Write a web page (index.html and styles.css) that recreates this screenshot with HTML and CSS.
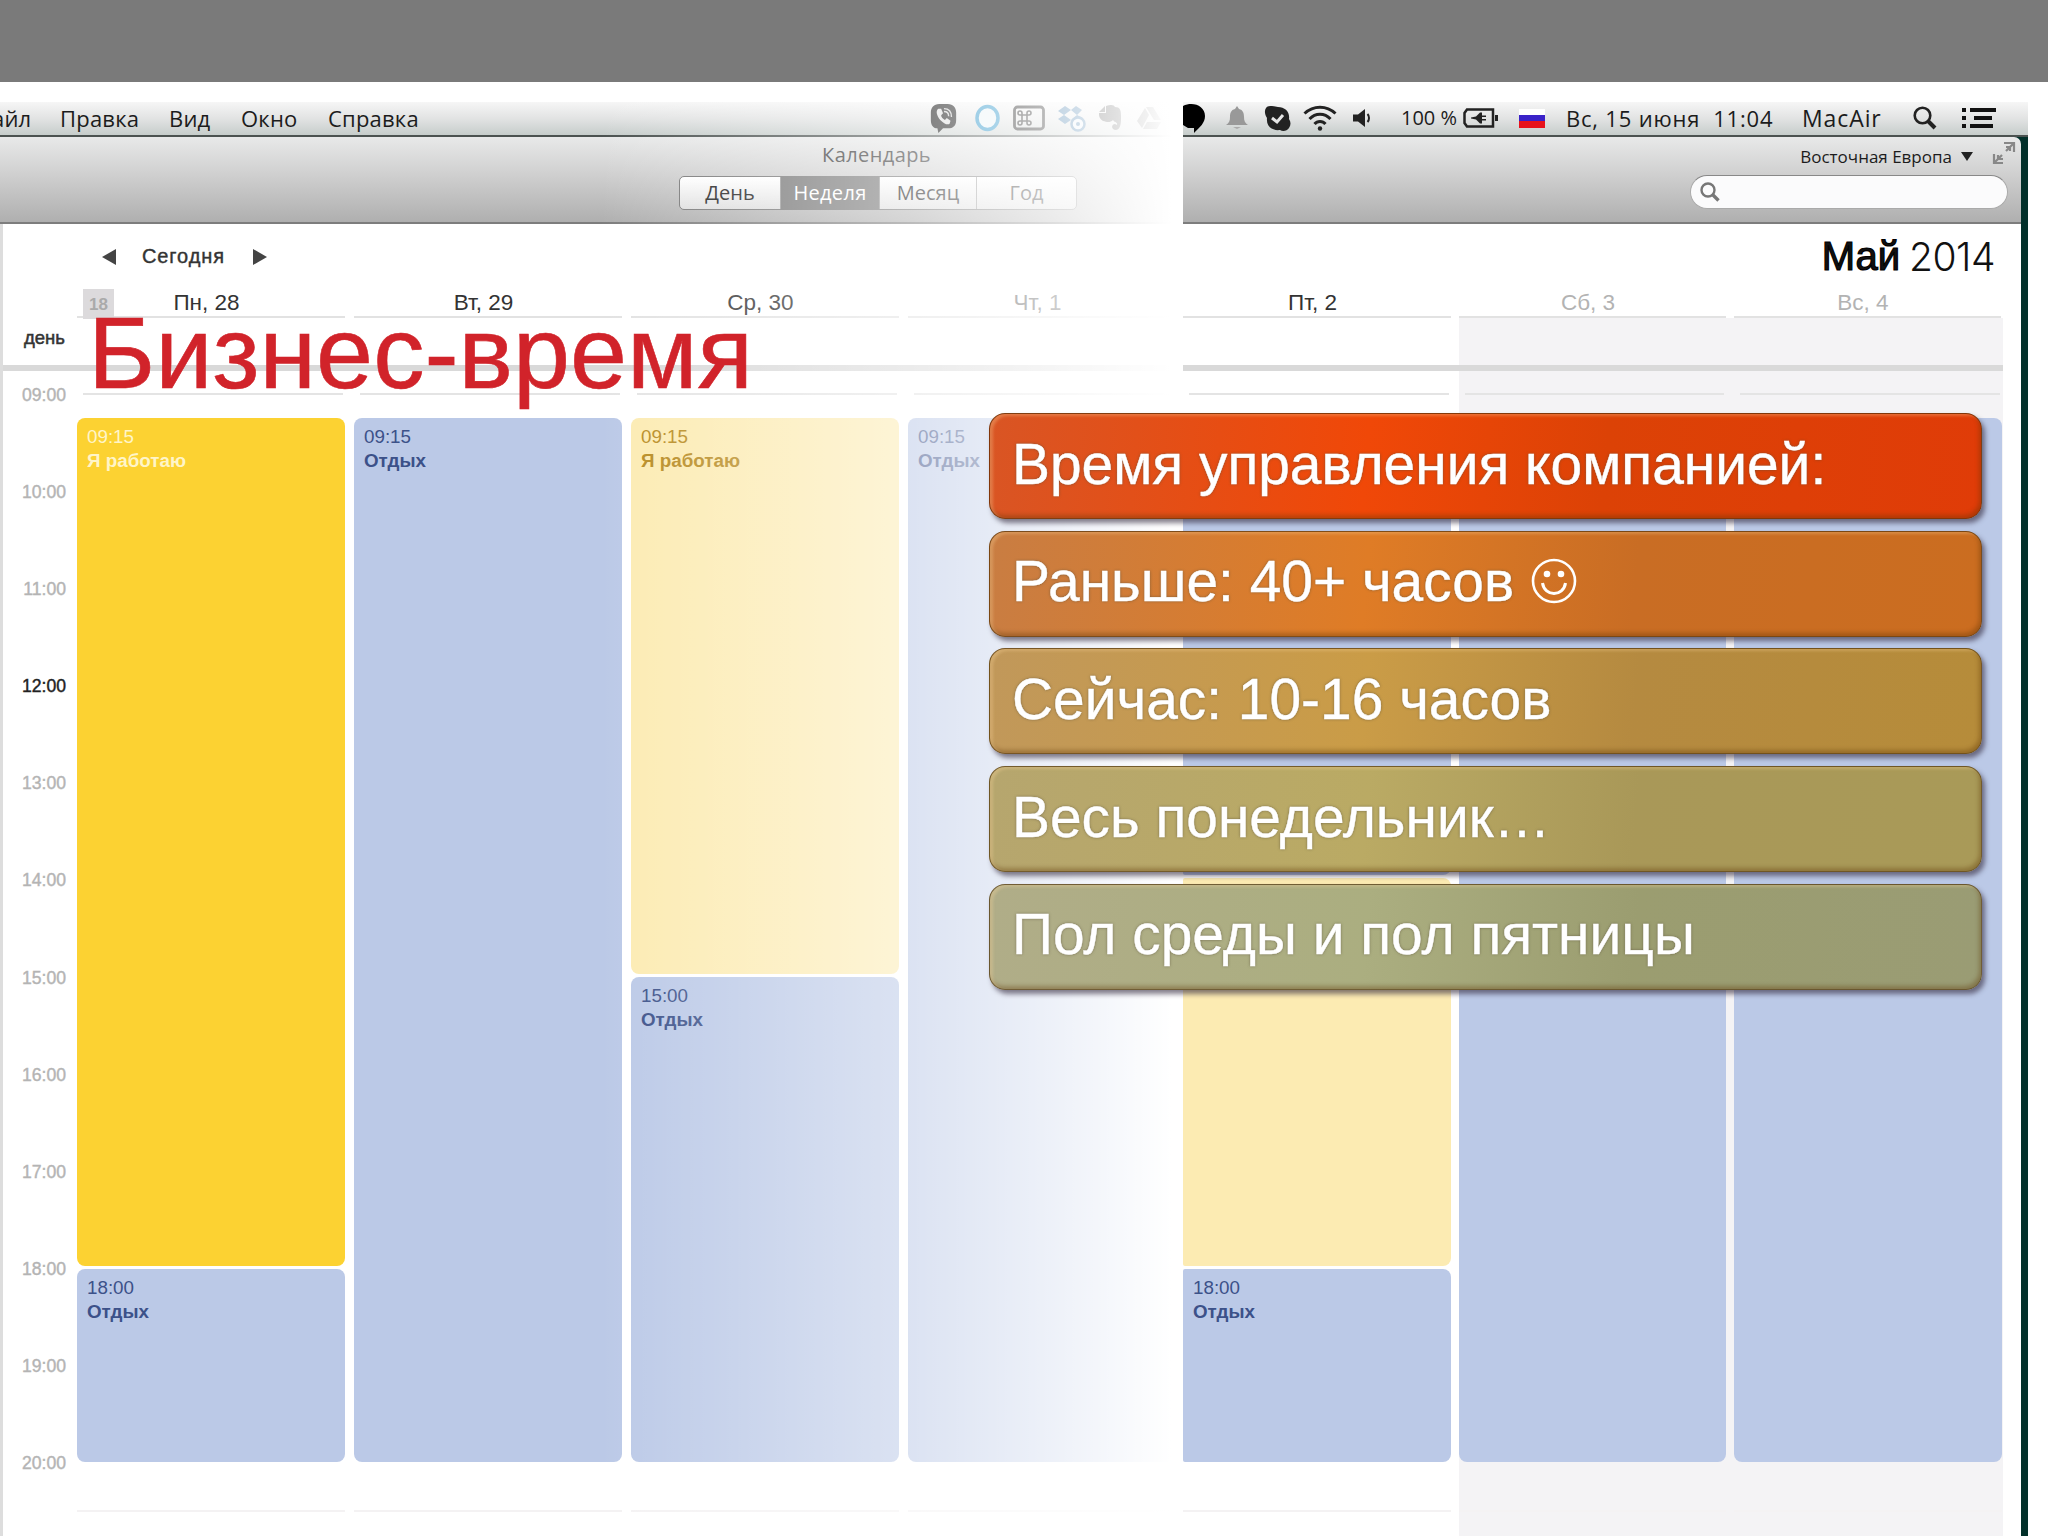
FILE: index.html
```html
<!DOCTYPE html>
<html lang="ru">
<head>
    <meta charset="UTF-8">
    <title>Бизнес-время</title>
    <link rel="stylesheet" href="styles.css">
</head>
<body>
    <div class="slide">
        <div class="top-strip"></div>

        <div class="screens">
            <!-- left part of the calendar, fades out to the right -->
            <section class="screen screen-left">
                <div class="menubar">
                    <nav class="menu">
                        <span>айл</span>
                        <span>Правка</span>
                        <span>Вид</span>
                        <span>Окно</span>
                        <span>Справка</span>
                    </nav>
                    <div class="tray">
                        <svg width="29" height="30" viewBox="0 0 29 32">
                            <path d="M10 1h9c6 0 9 4 9 9v8c0 6-3 9-9 9h-5l-5 5-1-5C4 27 1 24 1 18v-8c0-5 3-9 9-9z" fill="#000"/>
                            <path d="M9 6c-3 2-2 7 2 12 4 4 8 6 10 4l1-3-4-3-2 2c-2-1-4-3-4-5l2-2-2-5z" fill="#ddd"/>
                            <path d="M15 6c5 0 8 3 8 9M15 9c3 0 5 2 5 5" fill="none" stroke="#ccc" stroke-width="1.5"/>
                        </svg>
                        <svg width="27" height="30" viewBox="0 0 27 30">
                            <ellipse cx="13.500" cy="15" rx="10.500" ry="11.500" fill="#e9f2f5" stroke="#1389c4" stroke-width="3.500"/>
                        </svg>
                        <svg width="32" height="26" viewBox="0 0 32 26">
                            <rect x="1.500" y="2" width="29" height="22" rx="3" fill="none" stroke="#000" stroke-width="2.800"/>
                            <path d="M9 10h5v6H9zM9 10H7a2 2 0 1 1 2-2zM14 10V8a2 2 0 1 1 2 2zM14 16h2a2 2 0 1 1-2 2zM9 16v2a2 2 0 1 1-2-2z" fill="none" stroke="#000" stroke-width="1.600"/>
                        </svg>
                        <svg width="30" height="28" viewBox="0 0 30 28">
                            <path d="M8 2l6 4-7 5-6-4zM19 2l6 4-5 5-6-5zM7 11l7 5-6 4-7-5zM20 11l-6 5 4 3 8-5z" fill="#1a5f98"/>
                            <circle cx="21" cy="20" r="6.500" fill="#e8f1f8" stroke="#1a5f98" stroke-width="2.500"/>
                            <circle cx="21" cy="20" r="2" fill="#1a5f98"/>
                        </svg>
                        <svg width="24" height="28" viewBox="0 0 24 28">
                            <path d="M1 8l6-6v6zM8 2c6-2 8-1 9 1 5 0 6 3 6 9 0 7 0 13-5 14-5 0-5-6-1-6l2 1c1-3-2-2-4-5-3 3-6 2-10 1C1 14 1 12 1 9h7z" fill="#000"/>
                        </svg>
                        <svg width="26" height="24" viewBox="0 0 26 24">
                            <path d="M10 1h7l8 13h-7zM9 2l4 7-7 13-5-7zM11 16h14l-4 7H7z" fill="#000"/>
                        </svg>
                    </div>
                </div>

                <div class="toolbar">
                    <div class="window-title">Календарь</div>
                    <div class="segments">
                        <span>День</span>
                        <span class="active">Неделя</span>
                        <span>Месяц</span>
                        <span>Год</span>
                    </div>
                </div>

                <div class="calendar">
                    <div class="nav-row">
                        <svg width="14" height="16" viewBox="0 0 14 16"><path d="M14 0v16L0 8z" fill="#444"/></svg>
                        <span>Сегодня</span>
                        <svg width="14" height="16" viewBox="0 0 14 16"><path d="M0 0v16l14-8z" fill="#444"/></svg>
                    </div>
                    <div class="days">
                        <div class="day"><span class="week-badge">18</span>Пн, 28</div>
                        <div class="day">Вт, 29</div>
                        <div class="day">Ср, 30</div>
                        <div class="day">Чт, 1</div>
                    </div>
                    <div class="all-day">день</div>
                    <div class="grid">
                        <div class="hours">
                            <span>09:00</span>
                            <span>10:00</span>
                            <span>11:00</span>
                            <span class="noon">12:00</span>
                            <span>13:00</span>
                            <span>14:00</span>
                            <span>15:00</span>
                            <span>16:00</span>
                            <span>17:00</span>
                            <span>18:00</span>
                            <span>19:00</span>
                            <span>20:00</span>
                        </div>
                        <div class="column">
                            <div class="event work-solid to-18">09:15<b>Я работаю</b></div>
                            <div class="event rest">18:00<b>Отдых</b></div>
                        </div>
                        <div class="column">
                            <div class="event rest">09:15<b>Отдых</b></div>
                        </div>
                        <div class="column">
                            <div class="event work to-15">09:15<b>Я работаю</b></div>
                            <div class="event rest">15:00<b>Отдых</b></div>
                        </div>
                        <div class="column">
                            <div class="event rest">09:15<b>Отдых</b></div>
                        </div>
                    </div>
                </div>
                <div class="fade"></div>
            </section>

            <!-- right part -->
            <section class="screen screen-right">
                <div class="menubar status">
                    <svg width="23" height="30" viewBox="0 0 23 30">
                        <path d="M0 3C10-2 22 3 22 13c0 7-5 11-11 17v-5H5l-5-3z" fill="#000"/>
                    </svg>
                    <svg width="22" height="24" viewBox="0 0 22 24">
                        <path d="M11 0l2 3c4 1 5 4 5 8 0 4 1 6 4 8H0c3-2 4-4 4-8 0-4 1-7 5-8z" fill="#999"/>
                        <path d="M7 21h8l-4 2z" fill="#aaa"/>
                    </svg>
                    <svg width="27" height="27" viewBox="0 0 27 27">
                        <path d="M8 1c3 0 4 1 6 1 7 0 12 5 11 12 2 3 2 6 0 9-2 3-6 4-9 2C8 26 2 21 3 13 1 10 0 6 2 3c1-2 4-2 6-2z" fill="#222"/>
                        <path d="M8 13l5 4 6-7" fill="none" stroke="#e5e5e5" stroke-width="3"/>
                    </svg>
                    <svg width="34" height="26" viewBox="0 0 34 26" fill="none" stroke="#222" stroke-width="3">
                        <path d="M1.500 8.500c9-8.500 22-8.500 31 0M6.500 14c6-6.500 15-6.500 21 0M11.500 19c3-3.500 8-3.500 11 0"/>
                        <circle cx="17" cy="23.500" r="2.200" fill="#222" stroke="none"/>
                    </svg>
                    <svg width="18" height="18" viewBox="0 0 18 18">
                        <path d="M0 5.500h5L12 0v18l-7-5.500H0z" fill="#222"/>
                        <path d="M14.500 5c2 2 2 6 0 8" fill="none" stroke="#222" stroke-width="2"/>
                    </svg>
                    <span class="percent">100 %</span>
                    <svg width="35" height="20" viewBox="0 0 35 20">
                        <path d="M4 1.500L1.500 5v10L4 18.500h26v-17z" fill="none" stroke="#222" stroke-width="2.500"/>
                        <path d="M32 7h3v6h-3z" fill="#222"/>
                        <path d="M8 9.500l5-1 4-4h2v3h4v1.500h-4v2h4v1.500h-4v3h-2l-4-4-5-1z" fill="#222"/>
                    </svg>
                    <span class="flag"></span>
                    <span class="date">Вс, 15 июня&nbsp; 11:04</span>
                    <span class="user">MacAir</span>
                    <svg width="24" height="24" viewBox="0 0 24 24" fill="none" stroke="#222">
                        <circle cx="9.500" cy="9.500" r="7.800" stroke-width="2.600"/>
                        <path d="M15 15l7 7" stroke-width="4"/>
                    </svg>
                    <svg width="34" height="22" viewBox="0 0 34 22" fill="#111">
                        <path d="M0 1h4v4H0zM8 1h26v4H8zM0 9h4v4H0zM12 9h18v4H12zM0 17h4v4H0zM8 17h23v4H8z"/>
                    </svg>
                </div>

                <div class="window">
                    <div class="toolbar toolbar-right">
                        <div class="zone">
                            <span>Восточная Европа</span>
                            <svg width="12" height="9" viewBox="0 0 12 9"><path d="M0 0h12L6 9z" fill="#222"/></svg>
                            <svg class="expand" width="24" height="24" viewBox="0 0 24 24" fill="none" stroke="#888" stroke-width="2.200">
                                <path d="M12 2h10v9M22 2l-8 8M14 6h4v4M2 13v9h9M2 22l8-8M6 14v4h5"/>
                            </svg>
                        </div>
                        <div class="search">
                            <svg width="20" height="20" viewBox="0 0 20 20" fill="none" stroke="#777">
                                <circle cx="8" cy="8" r="6.500" stroke-width="2.400"/>
                                <path d="M12.500 12.500l6 6" stroke-width="3.400"/>
                            </svg>
                        </div>
                    </div>

                    <div class="calendar">
                        <div class="nav-row month"><b>Май</b><span>2014</span></div>
                        <div class="days">
                            <div class="day">Пт, 2</div>
                            <div class="day muted">Сб, 3</div>
                            <div class="day muted">Вс, 4</div>
                        </div>
                        <div class="all-day"><div class="weekend"></div></div>
                        <div class="grid">
                            <div class="column">
                                <div class="event rest to-14"></div>
                                <div class="event work from-14"></div>
                                <div class="event rest">18:00<b>Отдых</b></div>
                            </div>
                            <div class="column">
                                <div class="event rest"></div>
                            </div>
                            <div class="column">
                                <div class="event rest"></div>
                            </div>
                        </div>
                    </div>
                </div>
            </section>
        </div>

        <h1 class="title">Бизнес-время</h1>

        <div class="banners">
            <div class="banner b1">Время управления компанией:</div>
            <div class="banner b2">Раньше: 40+ часов
                <svg class="smile" width="46" height="46" viewBox="0 0 46 46" fill="none" stroke="#fff" stroke-width="2.600">
                    <circle cx="23" cy="23" r="21"/>
                    <path d="M11.500 25c2 14 21 14 23 0" stroke-width="3"/>
                    <circle cx="16" cy="16" r="3.300" fill="#fff" stroke="none"/>
                    <circle cx="30" cy="16" r="3.300" fill="#fff" stroke="none"/>
                </svg>
            </div>
            <div class="banner b3">Сейчас: 10-16 часов</div>
            <div class="banner b4">Весь понедельник…</div>
            <div class="banner b5">Пол среды и пол пятницы</div>
        </div>
    </div>
</body>
</html>
```
FILE: styles.css
```css
* {
    box-sizing: border-box;
}

body {
    margin: 0;
    background: #fff;
    font-family: "Liberation Sans", Arial, sans-serif;
}

.slide {
    position: relative;
    width: 2048px;
    height: 1536px;
    overflow: hidden;
}

.top-strip {
    height: 82px;
    margin-bottom: 20px;
    background: #7a7a7a;
}

.screens {
    display: flex;
    height: 1434px;
}

.screen {
    display: flex;
    flex-direction: column;
    overflow: hidden;
}

.screen-left {
    position: relative;
    width: 1183px;
}

.screen-right {
    width: 845px;
}

/* covers the left part with white towards its right edge */
.fade {
    position: absolute;
    top: 0;
    bottom: 0;
    left: 600px;
    right: 0;
    background: linear-gradient(90deg, rgba(255, 255, 255, 0), rgba(255, 255, 255, 0.48) 53%, rgba(255, 255, 255, 0.75) 78%, #fff 98%);
}

/* menu bar */
.menubar {
    display: flex;
    flex: none;
    align-items: center;
    height: 35px;
    padding-bottom: 1px;
    border-bottom: 2px solid #4b5250;
    background: linear-gradient(#f6f6f6, #e2e3e3 50%, #c6cdcb);
    font-family: "Open Sans", "Noto Sans", sans-serif;
    font-size: 22px;
    font-weight: 500;
    line-height: 30px;
    color: #1c1c1c;
    white-space: nowrap;
}

.menu {
    display: grid;
    grid-template-columns: 68px 109px 72px 87px 100px;
    margin-left: -8px;
    letter-spacing: 0.2px;
}

.tray {
    display: grid;
    grid-template-columns: 45px 39px 44px 41px 38px 28px;
    align-items: center;
    margin-left: 501px;
}

.status {
    display: grid;
    grid-template-columns: 43px 38px 39px 50px 48px 62px 56px 47px 236px 111px 49px 34px;
}

.percent {
    font-size: 20px;
}

.date {
    letter-spacing: 0.8px;
}

.user {
    font-size: 23px;
    letter-spacing: 0.9px;
}

.flag {
    width: 26px;
    height: 19px;
    background: linear-gradient(#fff 33%, #3a22c8 33%, #3a22c8 64%, #e8121c 64%);
}

/* toolbar */
.toolbar {
    display: flex;
    flex: none;
    flex-direction: column;
    align-items: flex-end;
    height: 87px;
    border-bottom: 2px solid #7d7d7d;
    background: linear-gradient(#e8e9e9, #cfcfcf 45%, #afafaf);
    font-family: "Open Sans", "Noto Sans", sans-serif;
}

.window-title {
    height: 39px;
    padding-right: 252px;
    font-size: 20px;
    font-weight: 500;
    line-height: 36px;
    letter-spacing: 0.4px;
    color: #333;
}

.segments {
    display: grid;
    grid-template-columns: 100px 99px 97px 100px;
    width: 398px;
    height: 34px;
    margin-right: 106px;
    border: 1px solid #777;
    border-radius: 5px;
    background: linear-gradient(#fff, #dedede);
    font-size: 20px;
    line-height: 32px;
    text-align: center;
    color: #222;
}

.segments span + span {
    border-left: 1px solid #999;
}

.segments .active {
    background: #777;
    font-weight: 500;
    letter-spacing: 0.3px;
    color: #fff;
}

.window {
    flex: 1;
    border-right: 7px solid #02302a;
    background: #02302a;
}

.toolbar-right {
    border-top-right-radius: 7px;
}

.zone {
    display: flex;
    align-items: center;
    height: 38px;
    padding-right: 5px;
    font-size: 17px;
    font-weight: 500;
    color: #1c1c1c;
}

.zone svg {
    margin-left: 9px;
}

.zone .expand {
    margin-left: 19px;
    margin-bottom: 6px;
}

.search {
    display: flex;
    align-items: center;
    width: 318px;
    height: 34px;
    margin-right: 13px;
    padding-left: 9px;
    border: 1px solid #aaa;
    border-top-color: #888;
    border-radius: 17px;
    background: #fbfbfc;
}

/* calendar */
.calendar {
    flex: 1;
    min-height: 1312px;
    background: #fff;
}

.screen-left .calendar {
    border-left: 3px solid #ddd;
}

.nav-row {
    display: flex;
    align-items: center;
    height: 65px;
    padding-left: 99px;
    font-size: 20px;
    color: #333;
    -webkit-text-stroke: 0.4px #333;
}

.nav-row span {
    width: 83px;
    margin: 0 28px 0 26px;
    letter-spacing: 0.9px;
}

.month {
    justify-content: flex-end;
    padding: 0 26px 0 0;
    font-size: 40px;
    color: #111;
    -webkit-text-stroke: 0;
}

.month b {
    font-weight: 400;
    -webkit-text-stroke: 1.2px #000;
}

.month span {
    width: auto;
    margin: 0 0 0 9px;
    font-family: Inter, Lato, sans-serif;
    font-size: 39px;
    font-weight: 300;
    letter-spacing: -0.5px;
}

.days {
    display: grid;
    grid-template-columns: repeat(4, 268px);
    gap: 9px;
    height: 29px;
    padding-left: 74px;
}

.day {
    position: relative;
    height: 29px;
    padding-right: 9px;
    border-bottom: 2px solid #e2e2e2;
    font-size: 22.500px;
    line-height: 27px;
    text-align: center;
    color: #333;
}

.day.muted {
    color: #b3b3b3;
}

.week-badge {
    position: absolute;
    left: 6px;
    top: 0;
    width: 31px;
    height: 30px;
    background: #dcdadc;
    font-size: 17px;
    font-weight: 700;
    line-height: 31px;
    color: #aaa;
}

.all-day {
    height: 53px;
    padding-left: 21px;
    border-bottom: 6px solid #d9d9d9;
    font-size: 18.500px;
    line-height: 40px;
    color: #333;
    -webkit-text-stroke: 0.5px #333;
}

.grid {
    display: grid;
    grid-template-columns: 65px repeat(4, 268px);
    column-gap: 9px;
    height: 1165px;
}

.hours {
    display: flex;
    flex-direction: column;
    width: 63px;
    margin-top: -25px;
    text-align: right;
    font-size: 17.600px;
    color: #b4b4b4;
    -webkit-text-stroke: 0.4px #b4b4b4;
}

.hours span {
    flex: none;
    height: 97.100px;
    line-height: 98px;
}

.hours .noon {
    color: #222;
    -webkit-text-stroke-color: #222;
}

.column {
    display: flex;
    flex-direction: column;
    gap: 3px;
    height: 1141px;
    padding-top: 22px;
}

.column::before {
    content: "";
    flex: none;
    height: 20px;
    margin: 0 2px 0 6px;
    border-top: 2px solid #e4e4e4;
}

.column::after {
    content: "";
    flex: none;
    height: 2px;
    margin-top: 45px;
    background: #f4f2f3;
}

.event {
    flex: 1;
    padding: 7px 0 0 10px;
    border-radius: 8px;
    font-size: 18.800px;
    line-height: 24px;
}

.event b {
    display: block;
    font-size: 18.800px;
}

.rest {
    background: #bbc9e7;
    color: #3c5189;
}

.work {
    background: #fcebb2;
    color: #b78a20;
}

.work-solid {
    background: #fcd232;
    color: #fff5c8;
}

.to-14 {
    flex: 0 0 457px;
}

.from-14 {
    flex: 0 0 388px;
}

.to-15 {
    flex: 0 0 556px;
}

.to-18 {
    flex: 0 0 848px;
}

.screen-right .days {
    grid-template-columns: 268px 267px 267px;
    gap: 8px;
    padding-left: 0;
}

.screen-right .all-day {
    padding: 0;
    width: 820px;
}

.weekend {
    height: 47px;
    margin-left: 276px;
    background: #f4f3f5;
}

.screen-right .grid {
    grid-template-columns: 268px 267px 268px;
    column-gap: 8px;
    width: 820px;
    background: linear-gradient(90deg, #fff 276px, #f4f3f5 276px);
}

/* the first column is cut at the seam, so its left corners are square */
.screen-right .column:first-child .event {
    border-top-left-radius: 2px;
    border-bottom-left-radius: 2px;
}

/* slide text */
.title {
    position: absolute;
    left: 88px;
    top: 295px;
    margin: 0;
    font-size: 102.500px;
    font-weight: 400;
    line-height: 116px;
    white-space: nowrap;
    color: #d1232a;
    -webkit-text-stroke: 0.6px #d1232a;
}

.banners {
    position: absolute;
    left: 989px;
    top: 413px;
    display: flex;
    flex-direction: column;
    gap: 11.700px;
    width: 993px;
}

.banner {
    display: flex;
    align-items: center;
    height: 106px;
    padding: 0 0 5px 22px;
    border: 1px solid rgba(80, 50, 10, 0.65);
    border-radius: 16px;
    box-shadow: 3px 4px 5px rgba(50, 40, 60, 0.6), inset 3px 2px 3px rgba(255, 220, 160, 0.3), inset -2px -3px 4px rgba(90, 50, 0, 0.35);
    font-size: 56.900px;
    white-space: nowrap;
    color: #fff;
    text-shadow: 0 0 3px rgba(90, 80, 60, 0.8);
    -webkit-text-stroke: 0.4px #fff;
}

.smile {
    margin-left: 17px;
}

.b1 {
    background: linear-gradient(95deg, #d95524, #f04808 38%, #dc4206 62%, #e03c08);
}

.b2 {
    background: linear-gradient(95deg, #c97d42, #df7c26 38%, #c96d24 65%, #cb6d20);
}

.b3 {
    background: linear-gradient(95deg, #c1985a, #ca9c47 38%, #b58a40 65%, #b68c3a);
}

.b4 {
    background: linear-gradient(95deg, #b6a66e, #baaa64 38%, #a99858 65%, #a99a58);
}

.b5 {
    background: linear-gradient(95deg, #b0ad88, #abae80 38%, #9b9d70 65%, #9a9c74);
}
```
